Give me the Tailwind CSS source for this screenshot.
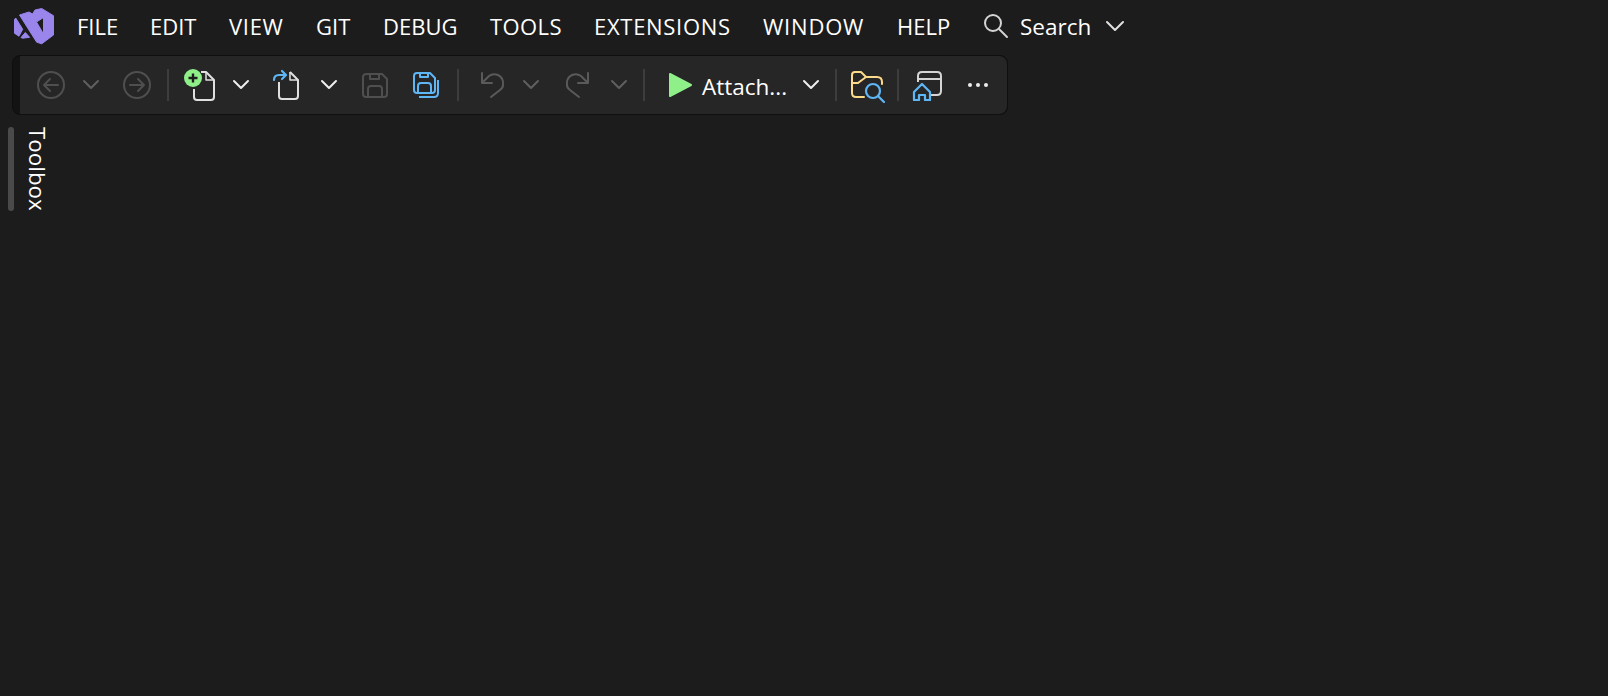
<!DOCTYPE html>
<html lang="en">
<head>
    <meta charset="UTF-8">
    <title>Visual Studio</title>
    <script src="https://cdn.jsdelivr.net/npm/@tailwindcss/browser@4"></script>
</head>
<body class="bg-[#1c1c1c] h-[696px] w-[1608px] overflow-hidden font-['Open_Sans',sans-serif] text-white">
    <!-- Menu bar -->
    <div class="h-[55px] flex items-center">
        <svg class="ml-[14px] w-[41px] h-[38px] mt-[-2px]" viewBox="0 0 41 38" fill="#9a85ec" stroke="#9a85ec" stroke-width="1" stroke-linejoin="round">
            <path fill-rule="evenodd" d="M5.5 7 L15 4 L18.5 6 L21 2 L27.7 0.5 L39.5 7.7 V27 L27.7 35.8 L22.7 34.2 Z M22.5 14 L29.5 9.5 V26 Z"/>
            <path d="M0.5 11.5 L1.7 10 L8.7 21.3 L5 28.2 L0.5 25.3 Z"/>
            <path d="M11.3 24.5 L15.6 29.3 L8.7 30.2 L7 29.5 Z"/>
        </svg>
        <nav class="flex items-center text-[22px] leading-none ml-[22px] mt-[-4px]">
            <span class="w-[73px]">FILE</span>
            <span class="w-[79px]">EDIT</span>
            <span class="w-[87px] tracking-[0.7px]">VIEW</span>
            <span class="w-[67px]">GIT</span>
            <span class="w-[107px]">DEBUG</span>
            <span class="w-[104px] tracking-[0.4px]">TOOLS</span>
            <span class="w-[169px] tracking-[0.7px]">EXTENSIONS</span>
            <span class="w-[134px] tracking-[0.8px]">WINDOW</span>
            <span class="w-[86px]">HELP</span>
        </nav>
        <svg class="w-[26px] h-[26px] mt-[-4px]" viewBox="0 0 26 26" fill="none" stroke="#d4d4d4" stroke-width="2" stroke-linecap="round">
            <circle cx="10" cy="10" r="8"/>
            <path d="M16 16 L24 24"/>
        </svg>
        <span class="ml-[11px] w-[84px] text-[22.5px] leading-none">Search</span>
        <svg class="w-[22px] h-[14px] mt-[-4px]" viewBox="0 0 22 14" fill="none" stroke="#e0e0e0" stroke-width="2" stroke-linecap="round" stroke-linejoin="round">
            <path d="M3 3 L11 11 L19 3"/>
        </svg>
    </div>

    <!-- Toolbar -->
    <div class="ml-[12px] w-[996px] h-[60px] rounded-[8px] bg-[#131313] border border-[#0f0f0f] flex">
        <div class="ml-[7px] flex-1 rounded-r-[8px] bg-[#262626] flex items-center pl-[15px]">
            <!-- back -->
            <svg class="w-[32px] h-[32px]" viewBox="0 0 32 32" fill="none" stroke="#4f4f4f" stroke-width="2" stroke-linecap="round" stroke-linejoin="round">
                <circle cx="16" cy="16" r="13"/>
                <path d="M23 16 H9 M15 10 L9 16 L15 22"/>
            </svg>
            <svg class="ml-[12px] w-[24px] h-[24px]" viewBox="0 0 24 24" fill="none" stroke="#5f5f5f" stroke-width="2" stroke-linecap="round" stroke-linejoin="round"><path d="M5 8 L12 15 L19 8"/></svg>
            <!-- forward -->
            <svg class="ml-[18px] w-[32px] h-[32px]" viewBox="0 0 32 32" fill="none" stroke="#4f4f4f" stroke-width="2" stroke-linecap="round" stroke-linejoin="round">
                <circle cx="16" cy="16" r="13"/>
                <path d="M9 16 H23 M17 10 L23 16 L17 22"/>
            </svg>
            <div class="ml-[14px] w-[2px] h-[32px] bg-[#3d3d3d]"></div>
            <!-- new file -->
            <svg class="ml-[12px] w-[36px] h-[36px]" viewBox="0 0 36 36" fill="none">
                <path d="M13 22 V30 Q13 33 16 33 H30 Q33 33 33 30 V13 L25 5 H20" stroke="#e0e0e0" stroke-width="2" stroke-linejoin="round"/>
                <path d="M25 5 V13 H33" stroke="#e0e0e0" stroke-width="1.5" stroke-linejoin="round"/>
                <circle cx="12" cy="11" r="9" fill="#8ff08a"/>
                <path d="M12 6.5 V15.5 M7.5 11 H16.5" stroke="#1c1c1c" stroke-width="2.4"/>
            </svg>
            <svg class="ml-[12px] w-[24px] h-[24px]" viewBox="0 0 24 24" fill="none" stroke="#eeeeee" stroke-width="2" stroke-linecap="round" stroke-linejoin="round"><path d="M5 8 L12 15 L19 8"/></svg>
            <!-- open file -->
            <svg class="ml-[17px] w-[32px] h-[32px]" viewBox="0 0 32 32" fill="none">
                <path d="M9 13 V27 Q9 30 12 30 H25 Q28 30 28 27 V11 L20 3" stroke="#e0e0e0" stroke-width="2" stroke-linejoin="round"/>
                <path d="M20 3 V11 H28" stroke="#e0e0e0" stroke-width="1.5" stroke-linejoin="round"/>
                <path d="M4 11 Q4 6 9 6 H15 M12 2 L16 6 L12 10" stroke="#5fb6f5" stroke-width="2.2" stroke-linecap="round" stroke-linejoin="round"/>
            </svg>
            <svg class="ml-[15px] w-[24px] h-[24px]" viewBox="0 0 24 24" fill="none" stroke="#eeeeee" stroke-width="2" stroke-linecap="round" stroke-linejoin="round"><path d="M5 8 L12 15 L19 8"/></svg>
            <!-- save -->
            <svg class="ml-[18px] w-[32px] h-[32px]" viewBox="0 0 32 32" fill="none" stroke="#4f4f4f" stroke-width="2" stroke-linejoin="round">
                <path d="M8 5 H23 L28 10 V25 Q28 28 25 28 H7 Q4 28 4 25 V8 Q4 5 8 5 Z"/>
                <path d="M11 5 V10 H20 V5 M9 28 V20 Q9 17 12 17 H20 Q23 17 23 20 V28"/>
            </svg>
            <!-- save all -->
            <svg class="ml-[19px] w-[32px] h-[32px]" viewBox="0 0 32 32" fill="none" stroke="#5fb6f5" stroke-width="2" stroke-linejoin="round">
                <path d="M7 4 H20 L25 9 V21 Q25 24 22 24 H7 Q4 24 4 21 V7 Q4 4 7 4 Z"/>
                <path d="M10 4 V8 H18 V4 M8 24 V17 Q8 14 11 14 H18 Q21 14 21 17 V24"/>
                <path d="M28 11 V24 Q28 28 24 28 H9"/>
            </svg>
            <div class="ml-[15px] w-[2px] h-[32px] bg-[#3d3d3d]"></div>
            <!-- undo -->
            <svg class="ml-[17px] w-[32px] h-[32px]" viewBox="0 0 32 32" fill="none" stroke="#5a5a5a" stroke-width="2" stroke-linecap="round" stroke-linejoin="round">
                <path d="M6 4 V14 H16 M6 14 L13 7 Q17 4 22 6 Q28 9 27 16 Q27 19 24 21 L15 28"/>
            </svg>
            <svg class="ml-[11px] w-[24px] h-[24px]" viewBox="0 0 24 24" fill="none" stroke="#5f5f5f" stroke-width="2" stroke-linecap="round" stroke-linejoin="round"><path d="M5 8 L12 15 L19 8"/></svg>
            <!-- redo -->
            <svg class="ml-[19px] w-[32px] h-[32px]" viewBox="0 0 32 32" fill="none" stroke="#5a5a5a" stroke-width="2" stroke-linecap="round" stroke-linejoin="round">
                <path d="M26 4 V14 H16 M26 14 L19 7 Q15 4 10 6 Q4 9 5 16 Q5 19 8 21 L17 28"/>
            </svg>
            <svg class="ml-[13px] w-[24px] h-[24px]" viewBox="0 0 24 24" fill="none" stroke="#5f5f5f" stroke-width="2" stroke-linecap="round" stroke-linejoin="round"><path d="M5 8 L12 15 L19 8"/></svg>
            <div class="ml-[12px] w-[2px] h-[32px] bg-[#3d3d3d]"></div>
            <!-- run -->
            <svg class="ml-[21px] w-[28px] h-[28px]" viewBox="0 0 28 28" fill="#8ff08a" stroke="#8ff08a" stroke-width="2" stroke-linejoin="round">
                <path d="M4 3 L25 14 L4 25 Z"/>
            </svg>
            <span class="ml-[8px] w-[85px] text-[22.5px] leading-none whitespace-nowrap mt-[4px]">Attach...</span>
            <svg class="ml-[12px] w-[24px] h-[24px]" viewBox="0 0 24 24" fill="none" stroke="#eeeeee" stroke-width="2" stroke-linecap="round" stroke-linejoin="round"><path d="M5 8 L12 15 L19 8"/></svg>
            <div class="ml-[12px] w-[2px] h-[32px] bg-[#3d3d3d]"></div>
            <!-- folder search -->
            <svg class="ml-[12px] w-[36px] h-[36px]" viewBox="0 0 36 36" fill="none" stroke-linecap="round" stroke-linejoin="round">
                <path d="M15 30 H7 Q3 30 3 26 V8 Q3 5 6 5 H12 L17 10 H28 Q33 10 33 15 V17 M3 16 L9 16 L17 10" stroke="#fdd98a" stroke-width="2"/>
                <circle cx="24" cy="24" r="7" stroke="#5fb6f5" stroke-width="2.2"/>
                <path d="M29 29 L35 35" stroke="#5fb6f5" stroke-width="2.2"/>
            </svg>
            <div class="ml-[12px] w-[2px] h-[32px] bg-[#3d3d3d]"></div>
            <!-- home -->
            <svg class="ml-[12px] w-[32px] h-[32px]" viewBox="0 0 32 32" fill="none" stroke-linejoin="round">
                <path d="M7 13 V7 Q7 3 11 3 H26 Q30 3 30 7 V22 Q30 26 26 26 H20 M7 10 H30" stroke="#d4d4d4" stroke-width="2"/>
                <path d="M3 23 L11 15 L19 23 V31 H14 V26 H8 V31 H3 Z" stroke="#5fb6f5" stroke-width="2.2"/>
            </svg>
            <svg class="ml-[23px] w-[24px] h-[24px]" viewBox="0 0 24 24" fill="#eeeeee">
                <circle cx="4" cy="12" r="2"/><circle cx="12" cy="12" r="2"/><circle cx="20" cy="12" r="2"/>
            </svg>
        </div>
    </div>

    <!-- Toolbox tab -->
    <div class="flex mt-[12px] ml-[8px] items-start">
        <div class="w-[6px] h-[84px] rounded-full bg-[#4a4a4a]"></div>
        <span class="ml-[9px] text-[22.4px] leading-[28px] [writing-mode:vertical-rl]">Toolbox</span>
    </div>
</body>
</html>
